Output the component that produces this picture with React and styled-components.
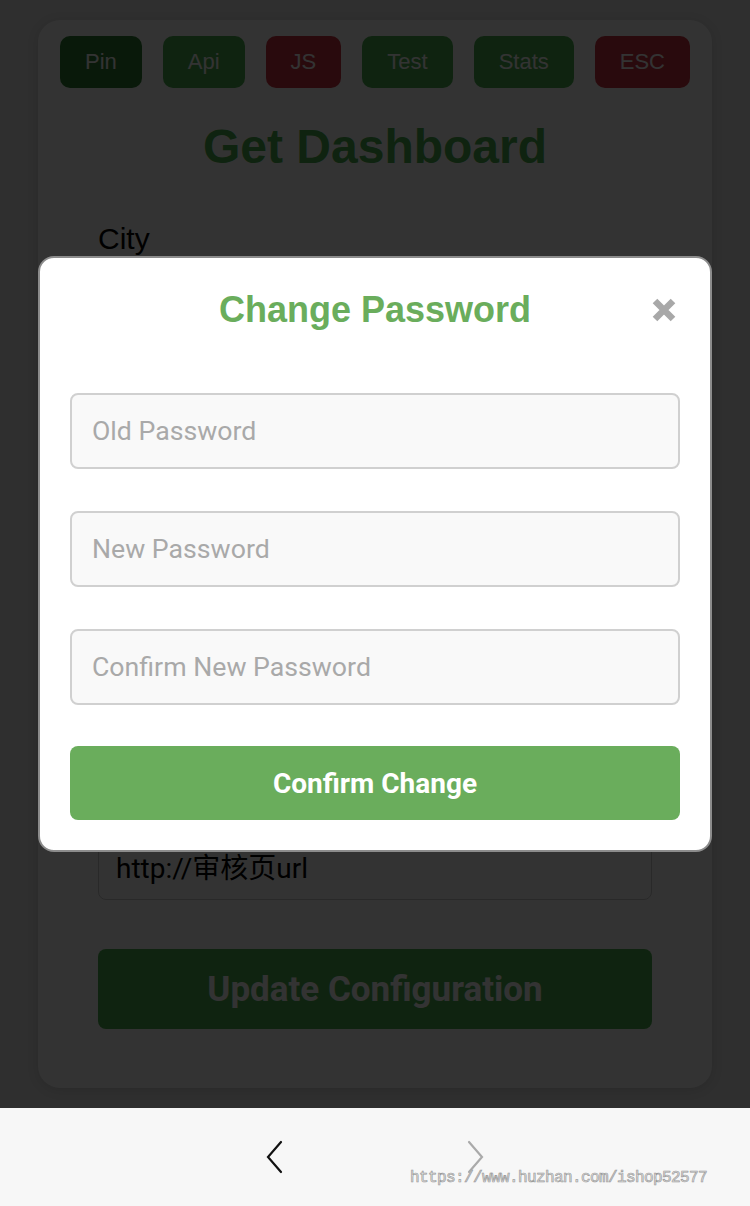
import React from 'react';
import styled, { createGlobalStyle } from 'styled-components';

const tabs = [
  { label: 'Pin', color: '#2e7d32' },
  { label: 'Api', color: '#4caf50' },
  { label: 'JS', color: '#cc3340' },
  { label: 'Test', color: '#4caf50' },
  { label: 'Stats', color: '#4caf50' },
  { label: 'ESC', color: '#cc3340' },
];

const fields = [
  { label: 'City', value: '' },
  { label: 'Domain', value: '' },
  { label: 'App ID', value: '' },
  { label: 'Channel', value: '' },
  { label: 'Audit URL', value: 'http://审核页url' },
];

const GlobalStyle = createGlobalStyle`
  * { box-sizing: border-box; }
  body {
    margin: 0;
    font-family: "Liberation Sans", Arial, sans-serif;
    background: #f7f7f7;
  }
`;

const Screen = styled.div`
  width: 750px;
  height: 1206px;
  display: flex;
  flex-direction: column;
`;

const Viewport = styled.div`
  position: relative;
  height: 1108px;
  overflow: hidden;
  background: #e8e8e8;
  padding: 20px 38px;
`;

const Card = styled.div`
  height: 1068px;
  background: #fff;
  border-radius: 22px;
  box-shadow: 0 2px 12px rgba(0, 0, 0, 0.12);
  padding: 16px 20px 60px;
`;

const TabRow = styled.div`
  display: flex;
  justify-content: center;
  gap: 21px;
`;

const Tab = styled.button`
  height: 52px;
  padding: 0 25px;
  border: none;
  border-radius: 10px;
  background: ${({ $color }) => $color};
  color: #fff;
  font-family: "Liberation Sans", Arial, sans-serif;
  font-size: 22px;
`;

const PageTitle = styled.h1`
  margin: 31px 0 0;
  height: 56px;
  line-height: 56px;
  text-align: center;
  color: #4caf50;
  font-size: 48px;
  font-weight: 700;
`;

const Form = styled.div`
  margin-top: 47px;
  padding: 0 40px;
  display: flex;
  flex-direction: column;
  gap: 32px;
`;

const Field = styled.div`
  display: flex;
  flex-direction: column;
  gap: 8px;
`;

const Label = styled.div`
  height: 34px;
  line-height: 34px;
  font-size: 30px;
  color: #000;
`;

const TextBox = styled.div`
  height: 68px;
  border: 1.5px solid #ccc;
  border-radius: 8px;
  padding: 0 17px;
  display: flex;
  align-items: center;
  font-family: Roboto, "Noto Sans CJK SC", sans-serif;
  font-size: 28px;
  color: #000;
`;

const UpdateButton = styled.button`
  margin: 49px 40px 0;
  width: calc(100% - 80px);
  height: 80px;
  border: none;
  border-radius: 8px;
  background: #4caf50;
  color: #fff;
  font-family: Roboto, sans-serif;
  font-weight: 700;
  font-size: 35px;
`;

const Overlay = styled.div`
  position: absolute;
  inset: 0;
  background: rgba(0, 0, 0, 0.8);
  display: flex;
  align-items: center;
  justify-content: center;
`;

const Modal = styled.div`
  width: 674px;
  background: #fff;
  border: 2px solid #8c8c8c;
  border-radius: 16px;
  padding: 31px 30px 30px;
  display: flex;
  flex-direction: column;
`;

const ModalHeader = styled.div`
  position: relative;
  height: 42px;
  display: flex;
  align-items: center;
  justify-content: center;
`;

const ModalTitle = styled.h2`
  margin: 0;
  color: #6aad5c;
  font-size: 36px;
  font-weight: 700;
`;

const Close = styled.div`
  position: absolute;
  right: 3px;
  top: 8px;
  width: 26px;
  height: 26px;
`;

const Inputs = styled.div`
  margin-top: 62px;
  display: flex;
  flex-direction: column;
  gap: 42px;
`;

const Input = styled.input`
  height: 76px;
  width: 100%;
  border: 2px solid #d0d0d0;
  border-radius: 8px;
  background: #f9f9f9;
  padding: 0 20px;
  font-family: Roboto, sans-serif;
  font-size: 26.7px;
  outline: none;
  &::placeholder { color: #a9a9a9; }
`;

const ConfirmButton = styled.button`
  margin-top: 41px;
  height: 74px;
  border: none;
  border-radius: 8px;
  background: #6aad5c;
  color: #fff;
  font-family: Roboto, sans-serif;
  font-weight: 700;
  font-size: 28px;
`;

const BottomBar = styled.div`
  position: relative;
  flex: 1;
  background: #f7f7f7;
  display: flex;
  align-items: center;
  justify-content: center;
  gap: 176px;
`;

const Watermark = styled.div`
  position: absolute;
  left: 410px;
  top: 61px;
  font-family: "Liberation Mono", "DejaVu Sans Mono", monospace;
  font-size: 16px;
  letter-spacing: -0.6px;
  color: #ececec;
  -webkit-text-stroke: 0.7px #9a9a9a;
`;

const Chevron = ({ dir, color }) => (
  <svg width="24" height="36" viewBox="0 0 24 36">
    <path
      d={dir === 'left' ? 'M18 3 L5 18 L18 33' : 'M6 3 L19 18 L6 33'}
      fill="none"
      stroke={color}
      strokeWidth="2.2"
      strokeLinecap="round"
    />
  </svg>
);

const App = () => (
  <Screen>
    <GlobalStyle />
    <Viewport>
      <Card>
        <TabRow>
          {tabs.map((t) => (
            <Tab key={t.label} $color={t.color}>{t.label}</Tab>
          ))}
        </TabRow>
        <PageTitle>Get Dashboard</PageTitle>
        <Form>
          {fields.map((f) => (
            <Field key={f.label}>
              <Label>{f.label}</Label>
              <TextBox>{f.value}</TextBox>
            </Field>
          ))}
        </Form>
        <UpdateButton>Update Configuration</UpdateButton>
      </Card>
      <Overlay>
        <Modal>
          <ModalHeader>
            <ModalTitle>Change Password</ModalTitle>
            <Close>
              <svg width="26" height="26" viewBox="0 0 26 26">
                <path d="M4 4 L22 22 M22 4 L4 22" stroke="#a8a8a8" strokeWidth="6.5" strokeLinecap="butt" />
              </svg>
            </Close>
          </ModalHeader>
          <Inputs>
            <Input type="password" placeholder="Old Password" />
            <Input type="password" placeholder="New Password" />
            <Input type="password" placeholder="Confirm New Password" />
          </Inputs>
          <ConfirmButton>Confirm Change</ConfirmButton>
        </Modal>
      </Overlay>
    </Viewport>
    <BottomBar>
      <Chevron dir="left" color="#111" />
      <Chevron dir="right" color="#aaa" />
      <Watermark>https://www.huzhan.com/ishop52577</Watermark>
    </BottomBar>
  </Screen>
);

export default App;
